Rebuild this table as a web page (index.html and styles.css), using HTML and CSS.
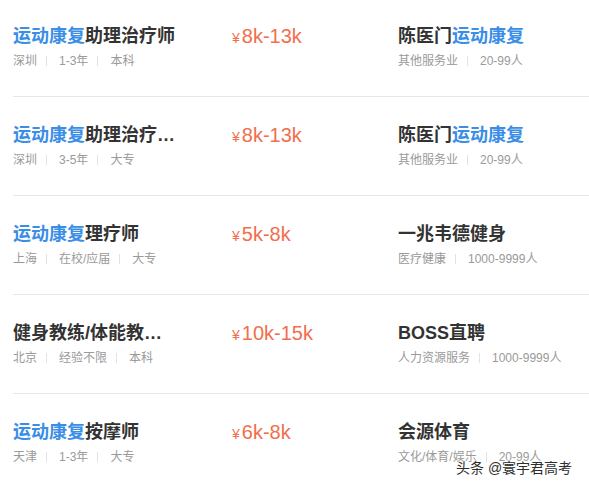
FILE: index.html
```html
<!DOCTYPE html>
<html lang="zh-CN">
<head>
  <meta charset="UTF-8" />
  <title>职位列表</title>
  <link rel="stylesheet" href="styles.css">
</head>
<body>
  <ul class="job-list">
    <li class="job">
      <div class="job-main">
        <div class="job-title"><span class="hl">运动康复</span>助理治疗师</div>
        <div class="meta">深圳<i></i>1-3年<i></i>本科</div>
      </div>
      <div class="salary"><span class="yen">¥</span>8k-13k</div>
      <div class="company">
        <div class="company-name">陈医门<span class="hl">运动康复</span></div>
        <div class="meta">其他服务业<i></i>20-99人</div>
      </div>
    </li>
    <li class="job">
      <div class="job-main">
        <div class="job-title"><span class="hl">运动康复</span>助理治疗师（门诊）</div>
        <div class="meta">深圳<i></i>3-5年<i></i>大专</div>
      </div>
      <div class="salary"><span class="yen">¥</span>8k-13k</div>
      <div class="company">
        <div class="company-name">陈医门<span class="hl">运动康复</span></div>
        <div class="meta">其他服务业<i></i>20-99人</div>
      </div>
    </li>
    <li class="job">
      <div class="job-main">
        <div class="job-title"><span class="hl">运动康复</span>理疗师</div>
        <div class="meta">上海<i></i>在校/应届<i></i>大专</div>
      </div>
      <div class="salary"><span class="yen">¥</span>5k-8k</div>
      <div class="company">
        <div class="company-name">一兆韦德健身</div>
        <div class="meta">医疗健康<i></i>1000-9999人</div>
      </div>
    </li>
    <li class="job">
      <div class="job-main">
        <div class="job-title">健身教练/体能教练/运动康复师</div>
        <div class="meta">北京<i></i>经验不限<i></i>本科</div>
      </div>
      <div class="salary"><span class="yen">¥</span>10k-15k</div>
      <div class="company">
        <div class="company-name">BOSS直聘</div>
        <div class="meta">人力资源服务<i></i>1000-9999人</div>
      </div>
    </li>
    <li class="job">
      <div class="job-main">
        <div class="job-title"><span class="hl">运动康复</span>按摩师</div>
        <div class="meta">天津<i></i>1-3年<i></i>大专</div>
      </div>
      <div class="salary"><span class="yen">¥</span>6k-8k</div>
      <div class="company">
        <div class="company-name">会源体育</div>
        <div class="meta">文化/体育/娱乐<i></i>20-99人</div>
      </div>
    </li>
  </ul>

  <div class="watermark">头条 @寰宇君高考</div>
</body>
</html>
```
FILE: styles.css
```css
body {
  margin: 0;
  background-color: #fff;
  font-family: "Liberation Sans", "Noto Sans CJK SC", sans-serif;
  color: #333;
  overflow: hidden;
}

.job-list {
  list-style: none;
  margin: -2px 0 0 13px;
  padding: 0;
}

.job {
  display: flex;
  padding: 26px 0;
  border-bottom: 1px solid #e6e6e6;
}

.job-main {
  width: 219px;
}

.job-title,
.company-name {
  font-size: 18px;
  font-weight: bold;
  line-height: 24px;
  color: #333;
  white-space: nowrap;
}

.job-title {
  width: 164px;
  overflow: hidden;
  text-overflow: ellipsis;
}

.hl {
  color: #3a8ee6;
}

.meta {
  margin-top: 4px;
  font-size: 12px;
  line-height: 18px;
  color: #9a9a9a;
  display: flex;
  align-items: center;
  white-space: nowrap;
}

.meta i {
  width: 1px;
  height: 10px;
  background-color: #e3e3e3;
  margin: 0 12px 0 9px;
}

.salary {
  width: 166px;
  font-size: 20px;
  line-height: 24px;
  color: #f26e4c;
}

.yen {
  font-size: 14px;
  margin-right: 2px;
}

.company {
  flex: 1;
}

.watermark {
  position: absolute;
  left: 456px;
  top: 458px;
  font-size: 14px;
  line-height: 20px;
  color: #2e2e2e;
  text-shadow: 0 0 2px #fff, 0 0 2px #fff, 0 0 3px #fff;
}
```
